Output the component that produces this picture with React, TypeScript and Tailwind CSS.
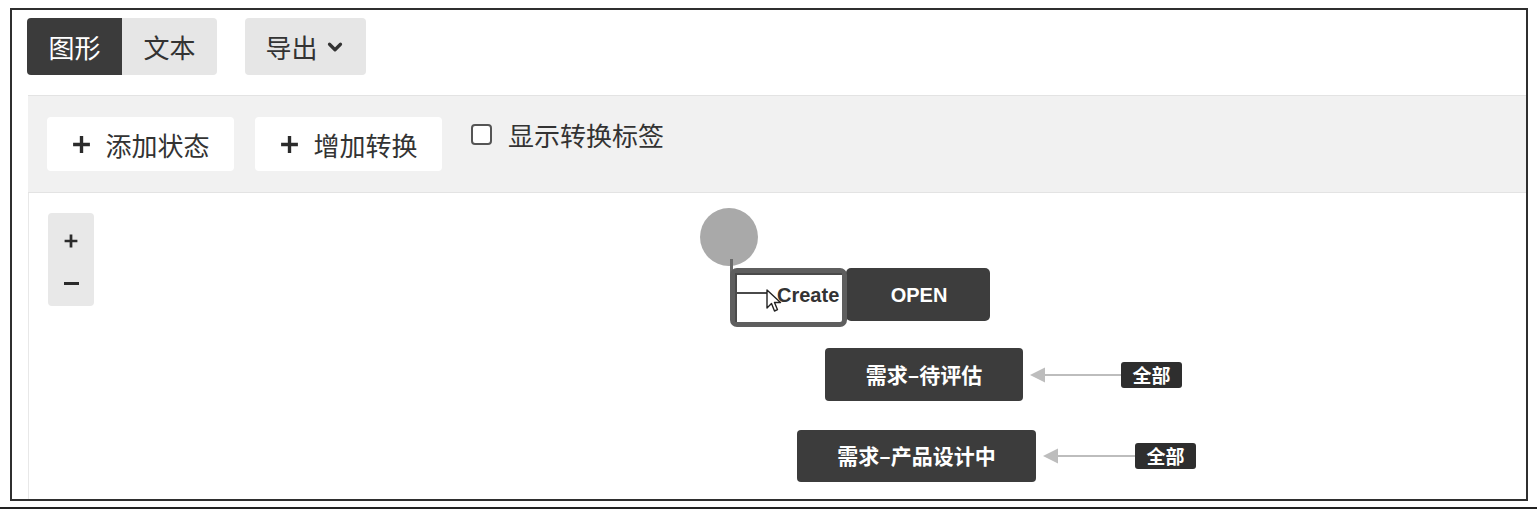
import { ChevronDown } from 'lucide-react';

const cjk = "font-['Microsoft_YaHei','Noto_Sans_CJK_SC',sans-serif]";

const PlusIcon = ({ size = 20, stroke = 3 }: { size?: number; stroke?: number }) => (
  <svg width={size} height={size} viewBox="0 0 20 20" fill="none">
    <path d="M10 2v16M2 10h16" stroke="#2b2b2b" strokeWidth={stroke} />
  </svg>
);

const Arrow = ({ left, top, width }: { left: number; top: number; width: number }) => (
  <svg
    className="absolute"
    style={{ left, top }}
    width={width}
    height={18}
    viewBox={`0 0 ${width} 18`}
  >
    <path d={`M14 9H${width}`} stroke="#bdbdbd" strokeWidth={2} />
    <path d="M0 9L15 1.5V16.5Z" fill="#bdbdbd" />
  </svg>
);

const Badge = ({ left, top }: { left: number; top: number }) => (
  <div
    className={`absolute h-[26px] w-[61px] rounded-[3px] bg-[#2e2e2e] text-white text-[19px] font-bold flex items-center justify-center ${cjk}`}
    style={{ left, top }}
  >
    全部
  </div>
);

const ToolButton = ({ label }: { label: string }) => (
  <button className="h-[54px] w-[187px] bg-white rounded-[4px] flex items-center justify-center gap-[13px] text-[#333] text-[26px]">
    <PlusIcon size={21} stroke={3.2} />
    <span>{label}</span>
  </button>
);

export default function App() {
  return (
    <div className={`w-[1537px] h-[510px] bg-white overflow-hidden ${cjk}`}>
      <div className="ml-[10px] mt-[8px] w-[1518px] h-[493px] border-2 border-[#2f2f2f] flex flex-col">
        {/* top bar */}
        <div className="flex items-center pl-[15px] pt-[8px] gap-[28px]">
          <div className="flex h-[57px] rounded-[4px] overflow-hidden">
            <div className="w-[95px] bg-[#3b3b3b] text-white text-[26px] flex items-center justify-center">
              图形
            </div>
            <div className="w-[95px] bg-[#e6e6e6] text-[#333] text-[26px] flex items-center justify-center">
              文本
            </div>
          </div>
          <div className="w-[121px] h-[57px] rounded-[4px] bg-[#e6e6e6] text-[#333] text-[26px] flex items-center justify-center gap-[6px]">
            <span>导出</span>
            <ChevronDown size={22} strokeWidth={3.5} color="#333" />
          </div>
        </div>

        {/* toolbar band */}
        <div className="ml-[16px] mt-[20px] h-[98px] bg-[#f1f1f1] border-y border-[#e3e3e3] flex items-start pl-[19px] pt-[21px]">
          <ToolButton label="添加状态" />
          <div className="ml-[21px]">
            <ToolButton label="增加转换" />
          </div>
          <label className="ml-[29px] mt-[4px] flex items-center gap-[16px] text-[26px] text-[#333]">
            <span className="w-[21px] h-[21px] border-2 border-[#555] rounded-[4px] bg-white -mt-[2px]" />
            <span className="leading-[28px]">显示转换标签</span>
          </label>
        </div>

        {/* canvas */}
        <div className="relative ml-[16px] flex-1 border-l border-[#e8e8e8] overflow-hidden">
          <div className="absolute left-[19px] top-[20px] w-[46px] h-[93px] rounded-[4px] bg-[#e8e8e8] flex flex-col items-center pt-[20px] gap-[33px]">
            <PlusIcon size={16} stroke={3.4} />
            <div className="w-[15px] h-[3px] bg-[#2b2b2b]" />
          </div>

          {/* start circle */}
          <div className="absolute left-[671px] top-[15px] w-[58px] h-[58px] rounded-full bg-[#a9a9a9]" />
          <div className="absolute left-[701px] top-[66px] w-[3px] h-[24px] bg-[#6a6a6a]" />

          {/* OPEN */}
          <div className="absolute left-[817px] top-[75px] w-[144px] h-[53px] rounded-[5px] bg-[#3d3d3d] flex items-center justify-center pl-[2px] text-white text-[20px] font-bold font-['Liberation_Sans',sans-serif]">
            OPEN
          </div>

          {/* Create (editing) */}
          <div className="absolute left-[701px] top-[75px] w-[117px] h-[59px] rounded-[7px] border-[5px] border-[#5e5e5e] bg-white">
            <div className="relative w-full h-full border-t-2 border-l-2 border-[#4a4a4a] overflow-hidden">
              <div className="absolute left-0 top-[17px] w-[32px] h-[2px] bg-[#4a4a4a]" />
              <span className="absolute left-[40px] top-[7px] text-[20px] font-bold text-[#333] font-['Liberation_Sans',sans-serif] leading-[26px]">
                Create
              </span>
              <svg className="absolute left-[29px] top-[14px]" width={16} height={24} viewBox="0 0 16 24">
                <path
                  d="M1 1V19L5.5 14.5L8.5 22L11.5 20.7L8.5 13.5H14.5Z"
                  fill="white"
                  stroke="#222"
                  strokeWidth={1.4}
                  strokeLinejoin="round"
                />
              </svg>
            </div>
          </div>

          {/* 需求–待评估 */}
          <div className="absolute left-[796px] top-[155px] w-[198px] h-[53px] rounded-[4px] bg-[#3c3c3c] flex items-center justify-center text-white text-[21px] font-bold">
            需求–待评估
          </div>
          <Arrow left={1001} top={173} width={93} />
          <Badge left={1092} top={169} />

          {/* 需求–产品设计中 */}
          <div className="absolute left-[768px] top-[237px] w-[239px] h-[52px] rounded-[4px] bg-[#3c3c3c] flex items-center justify-center text-white text-[21px] font-bold">
            需求–产品设计中
          </div>
          <Arrow left={1014} top={254} width={94} />
          <Badge left={1106} top={250} />
        </div>
      </div>
      <div className="mt-[6px] h-[2px] bg-[#222]" />
    </div>
  );
}
